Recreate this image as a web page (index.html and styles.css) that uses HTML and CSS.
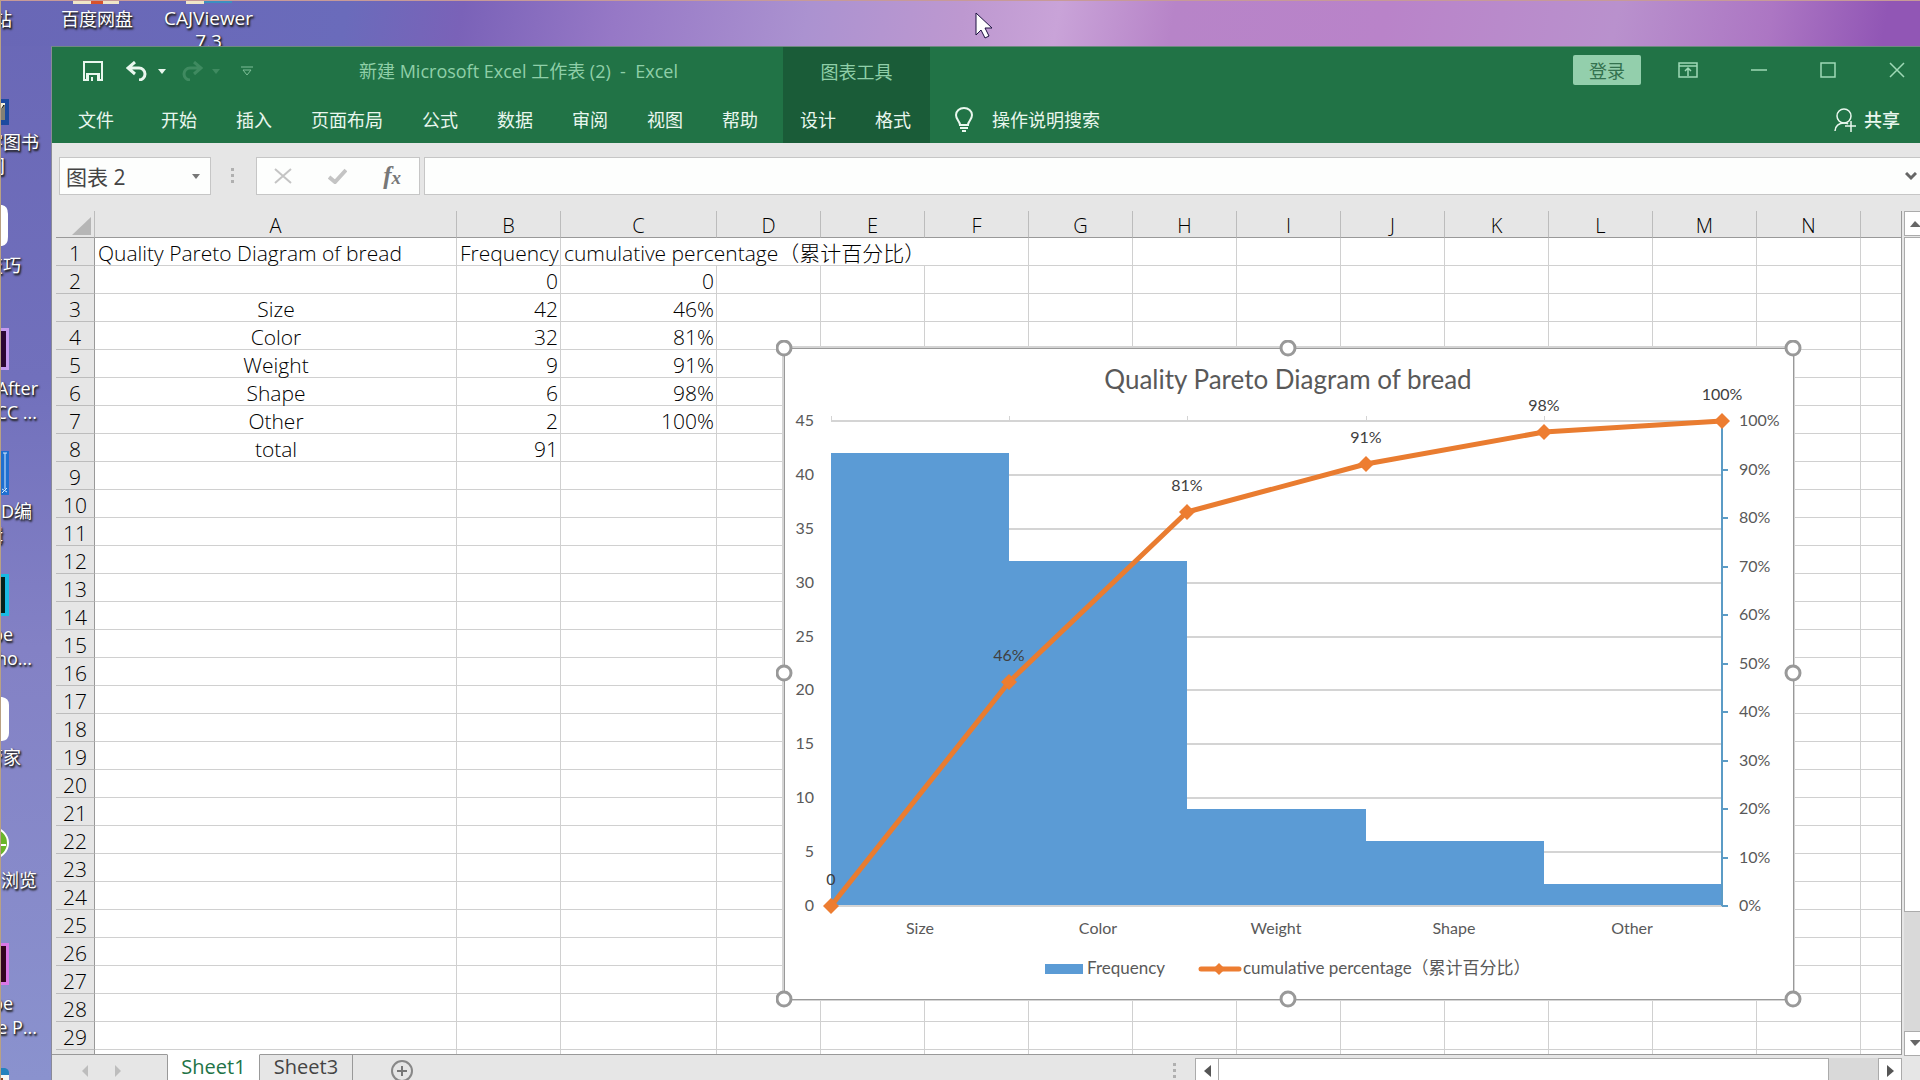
FILE: index.html
```html
<!DOCTYPE html>
<html lang="zh-CN">
<head>
<meta charset="utf-8">
<title>新建 Microsoft Excel 工作表 (2) - Excel</title>
<link rel="stylesheet" href="styles.css">
</head>
<body>
<div class="desktop">
  <div class="desktop-top">
    <span class="label label-site">站</span>
    <span class="label label-pan">百度网盘<svg class="app-tip" width="46" height="3"><path d="M0 0h46v3H0z" fill="#f0e6c8"/><path d="M18 0h12v3H18z" fill="#d9532c"/></svg></span>
    <span class="label label-caj">CAJViewer<br>7.3<svg class="app-tip" width="46" height="3"><path d="M0 0h18v3H0z" fill="#f0e6c8"/><path d="M18 0h28v2H18z" fill="#3c8fc0"/></svg></span>
  </div>
  <ul class="icons">
    <li><svg width="8" height="44"><path d="M0 17h8v26H0z" fill="#1d4aa0"/><path d="M0 21h4v17H0z" fill="#f4f0dc"/><path d="M1 38V26l2-3v15" stroke="#111" fill="none"/></svg><span class="label to-39">字图书</span><span class="label to-4">门</span></li>
    <li><svg width="8" height="44"><path d="M0 0h1q6 1 6 9v23q0 8-6 9H0z" fill="#fff"/></svg><span class="label to-21">技巧</span></li>
    <li><svg width="8" height="44"><path d="M0 0h8v42H0z" fill="#c49af0"/><path d="M0 3h5v36H0z" fill="#2c0634"/></svg><span class="label to-38">After</span><span class="label to-37">CC ...</span></li>
    <li><svg width="8" height="44"><path d="M0 0h8v44H0z" fill="#1f6fd0"/><path d="M4 2v36M2 2h4M1 42l5-5M1 38l5 3" stroke="#d8ecff" fill="none"/></svg><span class="label to-32">D编</span><span class="label to-2">辑</span></li>
    <li><svg width="8" height="44"><path d="M0 0h8v42H0z" fill="#19b9e4"/><path d="M0 3h4v36H0z" fill="#04201c"/></svg><span class="label to-13">be</span><span class="label to-32">ho...</span></li>
    <li><svg width="8" height="44"><path d="M0 0h1q7 1 7 8v28q0 7-7 8H0z" fill="#fff"/></svg><span class="label to-21">管家</span></li>
    <li><svg width="8" height="44"><ellipse cx="-8" cy="23" rx="15" ry="15" fill="#6ab52a" stroke="#fff" stroke-width="2"/><path d="M0 25h5" stroke="#fff" stroke-width="2"/></svg><span class="label to-37">浏览</span></li>
    <li><svg width="8" height="44"><path d="M0 0h8v42H0z" fill="#d977e6"/><path d="M0 3h5v36H0z" fill="#33051f"/></svg><span class="label to-13">be</span><span class="label to-37">e P...</span></li>
    <li><svg width="8" height="44"><path d="M0 2h4q4 1 4 5v37H0z" fill="#2382bd"/><path d="M0 9h8v30H0z" fill="#f6f6f2"/><path d="M0 12h2v10H0z" fill="#8a4420"/></svg></li>
  </ul>
</div>

<main class="window">
  <header class="ribbon">
    <div class="quick">
      <button class="tool" aria-label="保存"><svg width="20" height="20"><path d="M1 1h18v18H1z" fill="none" stroke="#e9f7ee" stroke-width="2"/><path d="M3 12h14v7H3z" fill="#e9f7ee"/><path d="M6 14h8v6H6z" fill="#217346"/><path d="M8 16h2v4H8z" fill="#e9f7ee"/></svg></button>
      <button class="tool undo" aria-label="撤消"><svg width="23" height="20"><path d="M9 1L2 7l7 6M2 7h11a6 6 0 0 1 0 12" fill="none" stroke="#e9f7ee" stroke-width="3"/></svg></button>
      <button class="tool drop" aria-label="撤消列表"><svg width="8" height="5"><path d="M0 0h8L4 5z" fill="#e9f7ee"/></svg></button>
      <button class="tool redo" aria-label="恢复" disabled><svg width="23" height="20"><path d="M14 1l7 6-7 6M21 7H10a6 6 0 0 0 0 12" fill="none" stroke="#3f8a60" stroke-width="3"/></svg></button>
      <button class="tool drop" aria-label="恢复列表" disabled><svg width="8" height="5"><path d="M0 0h8L4 5z" fill="#3f8a60"/></svg></button>
      <button class="tool custom" aria-label="自定义快速访问工具栏"><svg width="14" height="11"><path d="M1 1h12M3 4l4 5 4-5z" fill="none" stroke="#7fbf98"/></svg></button>
      <h1 class="doc-title">新建 Microsoft Excel 工作表 (2)&nbsp; - &nbsp;Excel</h1>
    </div>
    <div class="context-title">图表工具</div>
    <div class="caption">
      <button class="login">登录</button>
      <button class="tool" aria-label="功能区显示选项"><svg width="20" height="16"><path d="M1 1h18v14H1zM1 4h18M10 14V7M7 9l3-3 3 3" fill="none" stroke="#9fd9b6" stroke-width="1.5"/></svg></button>
      <button class="tool" aria-label="最小化"><svg width="16" height="16"><path d="M0 8h16" stroke="#9fd9b6" stroke-width="1.5"/></svg></button>
      <button class="tool" aria-label="最大化"><svg width="16" height="16"><path d="M1 1h14v14H1z" fill="none" stroke="#9fd9b6" stroke-width="1.5"/></svg></button>
      <button class="tool" aria-label="关闭"><svg width="16" height="16"><path d="M1 1l14 14M15 1L1 15" stroke="#9fd9b6" stroke-width="1.5"/></svg></button>
    </div>
    <nav class="tabs">
      <button class="tab file">文件</button><button class="tab">开始</button><button class="tab">插入</button><button class="tab">页面布局</button><button class="tab">公式</button><button class="tab">数据</button><button class="tab">审阅</button><button class="tab">视图</button><button class="tab">帮助</button>
    </nav>
    <nav class="tabs context"><button class="tab">设计</button><button class="tab">格式</button></nav>
    <div class="tell">
      <button class="tab tell-me"><svg width="18" height="26"><path d="M5 18c0-4-4-5-4-10a8 7 0 0 1 16 0c0 5-4 6-4 10zM5 21h8" fill="none" stroke="#e9f7ee" stroke-width="2"/><path d="M7 24h4" stroke="#e9f7ee" stroke-width="2"/></svg>操作说明搜索</button>
      <button class="tab share"><svg width="22" height="24"><circle cx="10" cy="8" r="7" fill="none" stroke="#e9f7ee" stroke-width="1.5"/><path d="M1 23c0-5 4-8 9-8 2 0 3 0 4 1M17 13v11M11 18h11" fill="none" stroke="#e9f7ee" stroke-width="1.5"/></svg>共享</button>
    </div>
  </header>

  <div class="formula-bar">
    <div class="box name-box"><input aria-label="名称框" value="图表 2"><button class="tool" aria-label="名称列表"><svg width="8" height="5"><path d="M0 0h8L4 5z" fill="#777"/></svg></button></div>
    <svg class="grip" width="4" height="16"><path d="M0 0h3v3H0zM0 6h3v3H0zM0 12h3v3H0z" fill="#b0b0b0"/></svg>
    <div class="box fx-box">
      <button class="tool" aria-label="取消"><svg width="18" height="16"><path d="M1 1l16 14M17 1L1 15" stroke="#c4c4c4" stroke-width="2"/></svg></button>
      <button class="tool" aria-label="输入"><svg width="19" height="16"><path d="M1 9l6 5L18 2" fill="none" stroke="#c4c4c4" stroke-width="4"/></svg></button>
      <button class="tool fx" aria-label="插入函数">f<small>x</small></button>
    </div>
    <div class="box formula"><input aria-label="编辑栏"><button class="tool" aria-label="展开编辑栏"><svg width="12" height="9"><path d="M1 1l5 5 5-5" fill="none" stroke="#666" stroke-width="3"/></svg></button></div>
  </div>

  <section class="sheet">
    <div class="grid">
      <table>
        <colgroup><col class="c-head"><col class="c-a"><col class="c-n"><col class="c-c"><col class="c-n" span="11"><col></colgroup>
        <thead><tr><th class="corner"><svg width="19" height="18"><path d="M19 0v18H0z" fill="#b6b6b6"/></svg><th>A<th>B<th>C<th>D<th>E<th>F<th>G<th>H<th>I<th>J<th>K<th>L<th>M<th>N<th></tr></thead>
        <tbody>
        <tr><th>1<td>Quality Pareto Diagram of bread<td>Frequency<td colspan="4">cumulative percentage（累计百分比）<td><td><td><td><td><td><td><td><td></tr>
        <tr><th>2<td><td class="num">0<td class="num">0<td><td><td><td><td><td><td><td><td><td><td><td></tr>
        <tr><th>3<td class="mid">Size<td class="num">42<td class="num">46%<td><td><td><td><td><td><td><td><td><td><td><td></tr>
        <tr><th>4<td class="mid">Color<td class="num">32<td class="num">81%<td><td><td><td><td><td><td><td><td><td><td><td></tr>
        <tr><th>5<td class="mid">Weight<td class="num">9<td class="num">91%<td><td><td><td><td><td><td><td><td><td><td><td></tr>
        <tr><th>6<td class="mid">Shape<td class="num">6<td class="num">98%<td><td><td><td><td><td><td><td><td><td><td><td></tr>
        <tr><th>7<td class="mid">Other<td class="num">2<td class="num">100%<td><td><td><td><td><td><td><td><td><td><td><td></tr>
        <tr><th>8<td class="mid">total<td class="num">91<td><td><td><td><td><td><td><td><td><td><td><td><td></tr>
        <tr><th>9<td><td><td><td><td><td><td><td><td><td><td><td><td><td><td></tr>
        <tr><th>10<td><td><td><td><td><td><td><td><td><td><td><td><td><td><td></tr>
        <tr><th>11<td><td><td><td><td><td><td><td><td><td><td><td><td><td><td></tr>
        <tr><th>12<td><td><td><td><td><td><td><td><td><td><td><td><td><td><td></tr>
        <tr><th>13<td><td><td><td><td><td><td><td><td><td><td><td><td><td><td></tr>
        <tr><th>14<td><td><td><td><td><td><td><td><td><td><td><td><td><td><td></tr>
        <tr><th>15<td><td><td><td><td><td><td><td><td><td><td><td><td><td><td></tr>
        <tr><th>16<td><td><td><td><td><td><td><td><td><td><td><td><td><td><td></tr>
        <tr><th>17<td><td><td><td><td><td><td><td><td><td><td><td><td><td><td></tr>
        <tr><th>18<td><td><td><td><td><td><td><td><td><td><td><td><td><td><td></tr>
        <tr><th>19<td><td><td><td><td><td><td><td><td><td><td><td><td><td><td></tr>
        <tr><th>20<td><td><td><td><td><td><td><td><td><td><td><td><td><td><td></tr>
        <tr><th>21<td><td><td><td><td><td><td><td><td><td><td><td><td><td><td></tr>
        <tr><th>22<td><td><td><td><td><td><td><td><td><td><td><td><td><td><td></tr>
        <tr><th>23<td><td><td><td><td><td><td><td><td><td><td><td><td><td><td></tr>
        <tr><th>24<td><td><td><td><td><td><td><td><td><td><td><td><td><td><td></tr>
        <tr><th>25<td><td><td><td><td><td><td><td><td><td><td><td><td><td><td></tr>
        <tr><th>26<td><td><td><td><td><td><td><td><td><td><td><td><td><td><td></tr>
        <tr><th>27<td><td><td><td><td><td><td><td><td><td><td><td><td><td><td></tr>
        <tr><th>28<td><td><td><td><td><td><td><td><td><td><td><td><td><td><td></tr>
        <tr><th>29<td><td><td><td><td><td><td><td><td><td><td><td><td><td><td></tr>
        <tr><th><td><td><td><td><td><td><td><td><td><td><td><td><td><td><td></tr>
        </tbody>
      </table>
      <svg class="chart" width="1026" height="668" viewBox="776 340 1026 668" role="img" aria-label="Quality Pareto Diagram of bread">
        <path d="M783 347h1011v653H783z" fill="#fff" stroke="#d4d4d4" stroke-width="2"/>
        <path d="M784.500 348.500h1009v651h-1009z" fill="none" stroke="#999"/>
        <g stroke="#d4d4d4" stroke-width="2"><path d="M831 421h891M831 475h891M831 529h891M831 583h891M831 637h891M831 690h891M831 744h891M831 798h891M831 852h891M831 906h891"/><path stroke-width="1" d="M831.500 416v5M1009.500 416v5M1187.500 416v5M1366.500 416v5M1544.500 416v5"/></g>
        <path d="M831 905V453h178v108h178v248h179v32h178v43h178v21z" fill="#5b9bd5"/>
        <path d="M1722 421v485M1722 906h6M1722 858h6M1722 809h6M1722 761h6M1722 712h6M1722 664h6M1722 615h6M1722 567h6M1722 518h6M1722 470h6" fill="none" stroke="#5b9bc5" stroke-width="2"/>
        <path d="M831 906L1009 682 1187 512 1366 464 1544 432 1722 421" fill="none" stroke="#e97c30" stroke-width="5" stroke-linejoin="round"/>
        <path d="M831 898l8 8-8 8-8-8zM1009 674l8 8-8 8-8-8zM1187 504l8 8-8 8-8-8zM1366 456l8 8-8 8-8-8zM1544 424l8 8-8 8-8-8zM1722 413l8 8-8 8-8-8z" fill="#ed7d31"/>
        <text class="chart-title" x="1288" y="389">Quality Pareto Diagram of bread</text>
        <g class="axis left"><text x="814" y="426">45</text><text x="814" y="480">40</text><text x="814" y="534">35</text><text x="814" y="588">30</text><text x="814" y="642">25</text><text x="814" y="695">20</text><text x="814" y="749">15</text><text x="814" y="803">10</text><text x="814" y="857">5</text><text x="814" y="911">0</text></g>
        <g class="axis"><text x="1739" y="426">100%</text><text x="1739" y="475">90%</text><text x="1739" y="523">80%</text><text x="1739" y="572">70%</text><text x="1739" y="620">60%</text><text x="1739" y="669">50%</text><text x="1739" y="717">40%</text><text x="1739" y="766">30%</text><text x="1739" y="814">20%</text><text x="1739" y="863">10%</text><text x="1739" y="911">0%</text></g>
        <g class="axis center"><text x="920" y="934">Size</text><text x="1098" y="934">Color</text><text x="1276" y="934">Weight</text><text x="1454" y="934">Shape</text><text x="1632" y="934">Other</text></g>
        <g class="axis center data"><text x="831" y="885">0</text><text x="1009" y="661">46%</text><text x="1187" y="491">81%</text><text x="1366" y="443">91%</text><text x="1544" y="411">98%</text><text x="1722" y="400">100%</text></g>
        <path d="M1045 964h38v10h-38z" fill="#5b9bd5"/>
        <path d="M1201 969h38" stroke="#ed7d31" stroke-width="5" stroke-linecap="round"/><path d="M1219 963l6 6-6 6-6-6z" fill="#ed7d31"/>
        <g class="legend"><text x="1087" y="974">Frequency</text><text x="1243" y="974">cumulative percentage（累计百分比）</text></g>
        <g fill="#fff" stroke="#999" stroke-width="3"><circle cx="784" cy="348" r="7"/><circle cx="1288" cy="348" r="7"/><circle cx="1793" cy="348" r="7"/><circle cx="784" cy="673" r="7"/><circle cx="1793" cy="673" r="7"/><circle cx="784" cy="999" r="7"/><circle cx="1288" cy="999" r="7"/><circle cx="1793" cy="999" r="7"/></g>
      </svg>
    </div>
    <div class="vscroll">
      <button class="vbtn" aria-label="向上"><svg width="11" height="7"><path d="M0 7l5-6 6 6z" fill="#666"/></svg></button>
      <div class="vthumb"></div>
      <div class="vtrack"></div>
      <button class="vbtn" aria-label="向下"><svg width="11" height="7"><path d="M0 0h11L5 6z" fill="#666"/></svg></button>
    </div>
  </section>

  <footer class="bottom">
    <button class="tool page-prev" aria-label="上一张" disabled><svg width="6" height="12"><path d="M6 0v12L0 6z" fill="#bdbdbd"/></svg></button>
    <button class="tool page-next" aria-label="下一张" disabled><svg width="6" height="12"><path d="M0 0v12l6-6z" fill="#bdbdbd"/></svg></button>
    <div class="sheet-tabs"><button class="sheet-tab active">Sheet1</button><button class="sheet-tab">Sheet3</button></div>
    <button class="tool add" aria-label="新工作表"><svg width="24" height="24"><circle cx="12" cy="12" r="10" fill="none" stroke="#888" stroke-width="2"/><path d="M12 7v10M7 12h10" stroke="#777" stroke-width="2"/></svg></button>
    <svg class="hgrip" width="4" height="16"><path d="M0 0h3v3H0zM0 6h3v3H0zM0 12h3v3H0z" fill="#b0b0b0"/></svg>
    <div class="hscroll">
      <button class="hbtn" aria-label="向左"><svg width="7" height="12"><path d="M7 0v12L0 6z" fill="#555"/></svg></button>
      <div class="hthumb"></div>
      <div class="htrack"></div>
      <button class="hbtn" aria-label="向右"><svg width="7" height="12"><path d="M0 0v12l7-6z" fill="#555"/></svg></button>
    </div>
  </footer>
</main>
<svg class="cursor" width="20" height="28"><path d="M1 1v22l5-5 4 8 4-2-4-8h7z" fill="#fff" stroke="#1c1040" stroke-linejoin="round"/></svg>
</body>
</html>
```
FILE: styles.css
```css
* { box-sizing: border-box; }
html, body { height: 100%; }
body {
  margin: 0;
  overflow: hidden;
  position: relative;
  padding: 46px 0 0 51px;
  font-family: "Open Sans", "Noto Sans CJK SC", sans-serif;
  font-size: 18px;
  background: linear-gradient(180deg, #6967b6, #7170bc 35%, #8381c5 60%, #8a92ce);
}
svg { display: block; flex: none; }
button, input {
  font: inherit;
  color: inherit;
  background: none;
  border: 0;
  padding: 0;
  margin: 0;
}

/* Desktop */
.desktop { position: absolute; inset: 0; border-left: 1px solid #b9a183; }
.desktop-top {
  height: 46px;
  border-top: 1px solid #c79a98;
  overflow: hidden;
  position: relative;
  background: linear-gradient(100deg, #6967b6 0, #6a6bbb 18%, #7a62b8 24%, #9678c6 32%, #ab92d0 42%, #bd98d0 50%, #c9a3d8 55%, #b784c8 61%, #b983c9 72%, #b991cd 84%, #ac76c3 92%, #9156b5 98%);
}
.label {
  color: #fff;
  line-height: 24px;
  white-space: nowrap;
  font-size: 18px;
  text-shadow: 1px 1px 2px #222, 1px 2px 2px #222;
}
.desktop-top .label { position: absolute; top: 6px; text-align: center; }
.desktop-top .label-site { left: -7px; }
.desktop-top .label-pan { left: 60px; }
.desktop-top .label-caj { left: 163px; font-size: 19px; line-height: 23px; }
.app-tip { position: absolute; top: -6px; left: 12px; }
.label-caj .app-tip { left: 22px; }
.icons { list-style: none; margin: 0; padding: 36px 0 0; width: 50px; overflow: hidden; height: calc(100% - 46px); }
.icons li { height: 123px; overflow: hidden; display: flex; flex-direction: column; }
.icons svg { margin-bottom: 4px; }
.icons .label { display: flex; justify-content: flex-end; }
.to-2 { width: 2px; }
.to-4 { width: 4px; }
.to-13 { width: 12px; }
.to-21 { width: 20px; }
.to-32 { width: 31px; }
.to-37 { width: 36px; }
.to-38 { width: 37px; }
.to-39 { width: 38px; }
.cursor { position: absolute; left: 975px; top: 12px; }

/* Window */
.window {
  position: relative;
  height: 100%;
  display: flex;
  flex-direction: column;
  border-top: 1px solid #6f8a80;
  border-left: 1px solid #8a8a98;
  background: #e6e6e6;
  color: #111;
}
.tool { display: flex; align-items: center; justify-content: center; }

/* Ribbon */
.ribbon {
  display: grid;
  grid-template-columns: auto auto 1fr;
  grid-template-rows: 48px 48px;
  background: #217346;
  color: #e9f7ee;
  flex: none;
}
.quick { display: flex; align-items: center; padding-left: 31px; }
.undo { margin-left: 23px; }
.redo { margin-left: 14px; }
.drop { margin-left: 9px; }
.custom { margin-left: 20px; }
.doc-title {
  margin: 0 0 0 105px;
  font-size: 18px;
  font-weight: 400;
  line-height: 24px;
  color: #8fcfa8;
  white-space: nowrap;
}
.context-title {
  background: #1a5c38;
  color: #8fcfa8;
  display: flex;
  align-items: center;
  justify-content: center;
}
.caption { display: flex; align-items: center; justify-content: flex-end; gap: 53px; padding: 0 15px 2px 0; }
.caption .tool:nth-child(2) { margin-left: -16px; }
.login { width: 68px; height: 30px; background: #93cfac; color: #33724f; border-radius: 2px; }
.tabs { display: flex; align-items: center; gap: 39px; padding: 2px 25px 0 26px; }
.tab { line-height: 30px; white-space: nowrap; }
.file { margin-right: 8px; }
.tabs.context { background: #1a5c38; padding: 2px 19px 0 17px; }
.tell { display: flex; align-items: center; justify-content: space-between; padding: 2px 20px 0 25px; }
.tell-me, .share { display: flex; align-items: center; gap: 19px; }
.share { gap: 8px; font-weight: 500; }

/* Formula bar */
.formula-bar { display: flex; align-items: center; padding: 14px 0 16px 7px; flex: none; }
.box { height: 38px; background: #fdfefd; border: 1px solid #c6c6c6; display: flex; align-items: center; }
.name-box { width: 152px; padding: 0 10px 0 6px; font-size: 21px; color: #444; }
.name-box input { flex: 1; min-width: 0; height: 34px; }
.grip { margin: 0 21px 0 20px; }
.fx-box { width: 164px; justify-content: space-between; padding: 0 18px 0 17px; }
.fx { font: italic 700 25px "Liberation Serif", serif; color: #777; }
.fx small { font-size: 19px; margin-top: 4px; }
.formula { flex: 1; margin-left: 4px; border-right: 0; padding-right: 3px; }
.formula input { flex: 1; height: 34px; }

/* Sheet */
.sheet { flex: 1; min-height: 0; display: flex; }
.grid { flex: 1; min-width: 0; padding-left: 4px; overflow: hidden; position: relative; border-right: 1px solid #999; }
table { width: 100%; table-layout: fixed; border-collapse: separate; border-spacing: 0; background: #fff; font-size: 21px; font-weight: 300; line-height: 24px; color: #000; }
.c-head { width: 39px; }
.c-a { width: 362px; }
.c-n { width: 104px; }
.c-c { width: 156px; }
td, th { height: 28px; padding: 3px 2px 0 3px; border: 0 solid #d0d0d0; border-width: 0 1px 1px 0; text-align: left; white-space: nowrap; font-weight: 300; }
th { background: #e6e6e6; text-align: center; padding: 3px 0 0; border-color: #bcbcbc; }
thead th { height: 27px; padding-top: 4px; border-bottom-color: #999; font-size: 20px; line-height: 22px; }
tbody th { border-right-color: #999; }
tr > :last-child { border-right: 0; }
.corner svg { margin-left: 16px; }
.mid { text-align: center; }
.num { text-align: right; }

/* Chart object floats over the cells */
.chart { position: absolute; left: 724px; top: 129px; font-family: Lato, "Noto Sans CJK SC", sans-serif; }
.chart-title { font-size: 26px; fill: #595959; text-anchor: middle; }
.axis { font-size: 16px; fill: #595959; }
.legend { font-size: 17px; fill: #595959; }
.left { text-anchor: end; }
.center { text-anchor: middle; }
.data { fill: #404040; }

/* Scroll bars */
.vscroll { width: 18px; padding-left: 2px; margin-bottom: -2px; position: relative; display: flex; flex-direction: column; overflow: hidden; background: #e6e6e6; }
.vbtn { width: 23px; height: 25px; flex: none; background: #fff; border: 1px solid #ababab; display: flex; align-items: center; justify-content: center; }
.vthumb { flex: 675; width: 23px; background: #fff; border: 1px solid #ababab; margin-top: 1px; }
.vtrack { flex: 119; width: 23px; background: #d9d9d9; }

.bottom { height: 26px; flex: none; display: flex; border-top: 1px solid #999; background: #e6e6e6; }
.page-prev { margin-left: 30px; padding-top: 6px; }
.page-next { margin-left: 27px; padding-top: 6px; }
.sheet-tabs { display: flex; margin: -1px 0 0 46px; }
.sheet-tab { width: 93px; font-size: 20px; line-height: 22px; padding-bottom: 2px; border-top: 1px solid #999; border-right: 1px solid #999; color: #444; }
.sheet-tab.active { background: #fff; color: #217346; border-top-color: #fff; border-left: 1px solid #999; }
.add { margin: 4px 0 0 37px; height: 24px; }
.hgrip { margin: 8px 18px 0 auto; }
.hscroll { display: flex; width: 707px; margin: 3px 18px 0 0; height: 26px; }
.hbtn { width: 24px; background: #fff; border: 1px solid #ababab; display: flex; align-items: center; justify-content: center; }
.hthumb { flex: 610; background: #fff; border: 1px solid #ababab; border-left: 0; }
.htrack { flex: 49; background: #d9d9d9; }
```
